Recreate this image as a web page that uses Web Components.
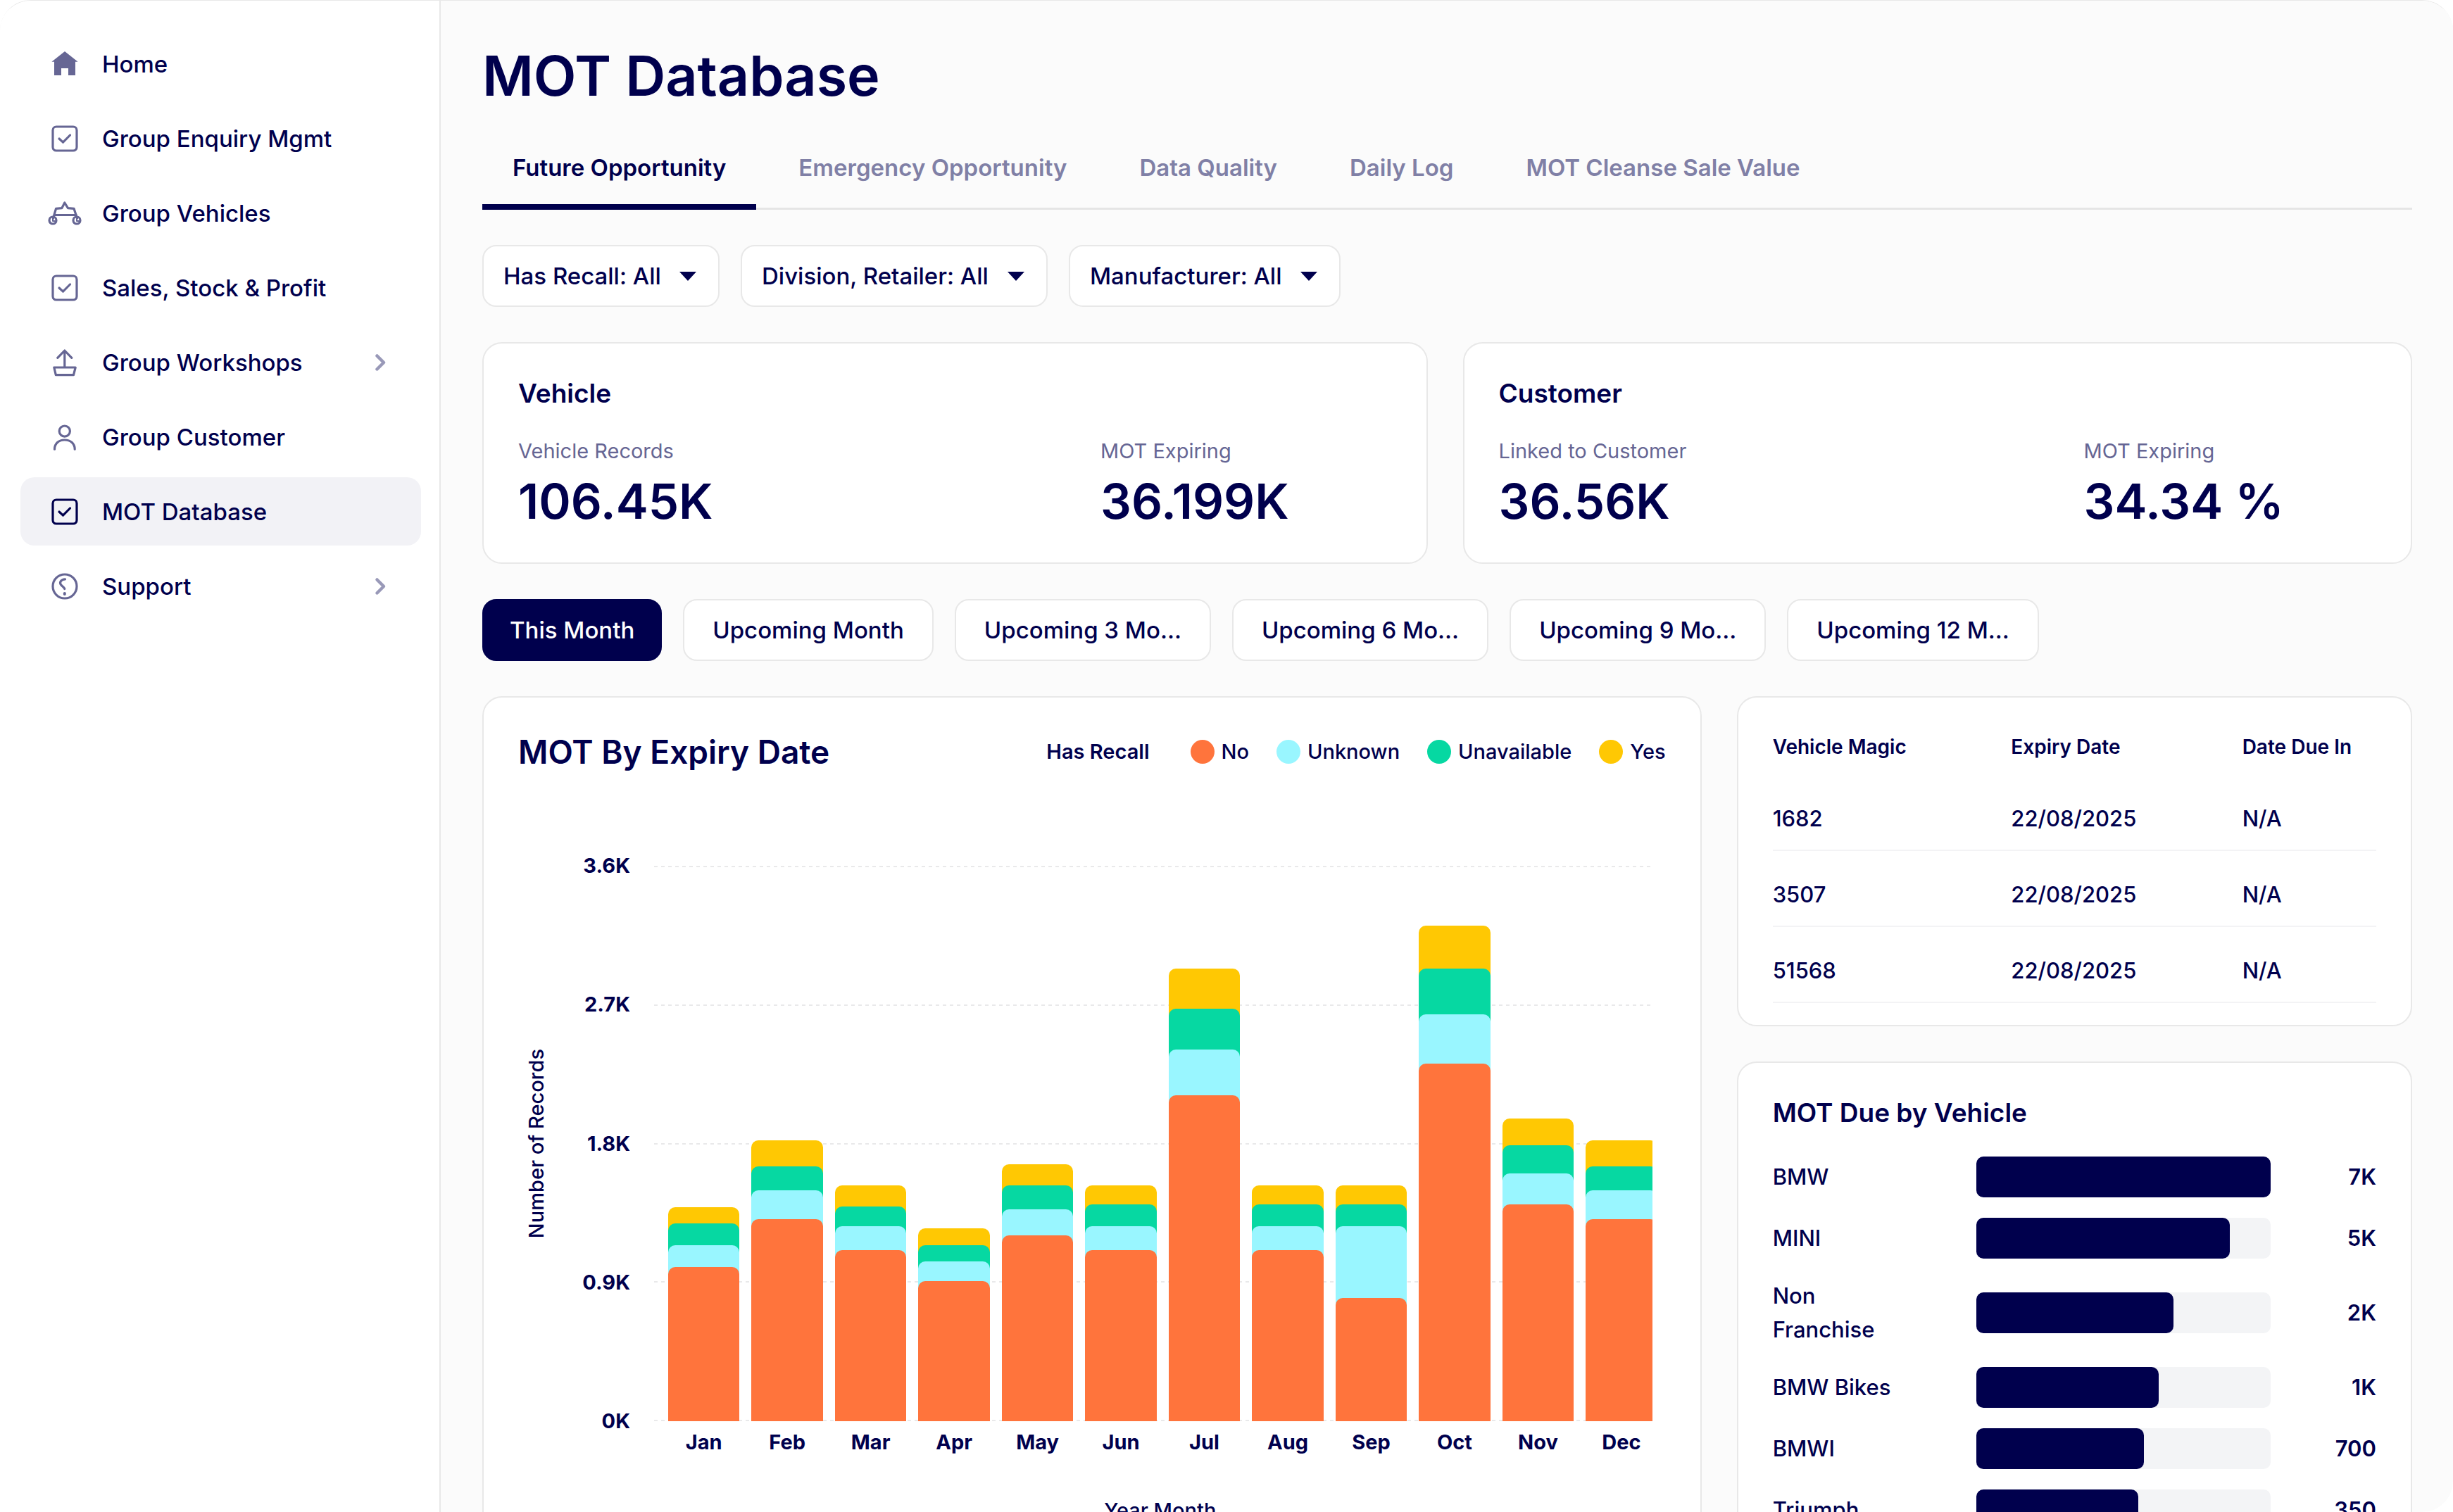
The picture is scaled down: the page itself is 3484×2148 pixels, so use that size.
<!DOCTYPE html>
<html lang="en">
<head>
<meta charset="utf-8">
<title>MOT Database</title>
<meta name="viewport" content="width=device-width, initial-scale=1">
<style>
  :root {
    --navy: #00004d;
    --navy-60: #666694;
    --navy-50: #8080a6;
    --navy-40: #9999b8;
    --line: #e8e8e8;
    --canvas: #fbfbfb;
    --tint: #f2f2f6;
    --track: #f3f4f6;
  }
  html, body { margin: 0; background: #fff; }
  body { font-family: Inter, "Liberation Sans", sans-serif; font-size: 33px; line-height: 40px; font-weight: 500; color: var(--navy); }
</style>
</head>
<body>

<app-shell>
  <side-nav slot="nav">
    <nav-item icon="home">Home</nav-item>
    <nav-item icon="check">Group Enquiry Mgmt</nav-item>
    <nav-item icon="vehicle">Group Vehicles</nav-item>
    <nav-item icon="check">Sales, Stock &amp; Profit</nav-item>
    <nav-item icon="workshop" expandable>Group Workshops</nav-item>
    <nav-item icon="person">Group Customer</nav-item>
    <nav-item icon="check" active>MOT Database</nav-item>
    <nav-item icon="support" expandable>Support</nav-item>
  </side-nav>

  <page-title>MOT Database</page-title>

  <tab-bar>
    <tab-item active>Future Opportunity</tab-item>
    <tab-item>Emergency Opportunity</tab-item>
    <tab-item>Data Quality</tab-item>
    <tab-item>Daily Log</tab-item>
    <tab-item>MOT Cleanse Sale Value</tab-item>
  </tab-bar>

  <button-row>
    <filter-select label="Has Recall"></filter-select>
    <filter-select label="Division, Retailer"></filter-select>
    <filter-select label="Manufacturer"></filter-select>
  </button-row>

  <summary-row>
    <ui-card heading="Vehicle">
      <stat-pair>
        <stat-figure label="Vehicle Records">106.45K</stat-figure>
        <stat-figure label="MOT Expiring">36.199K</stat-figure>
      </stat-pair>
    </ui-card>
    <ui-card heading="Customer">
      <stat-pair>
        <stat-figure label="Linked to Customer">36.56K</stat-figure>
        <stat-figure label="MOT Expiring">34.34 %</stat-figure>
      </stat-pair>
    </ui-card>
  </summary-row>

  <button-row>
    <period-button active>This Month</period-button>
    <period-button>Upcoming Month</period-button>
    <period-button>Upcoming 3 Mo...</period-button>
    <period-button>Upcoming 6 Mo...</period-button>
    <period-button>Upcoming 9 Mo...</period-button>
    <period-button>Upcoming 12 M...</period-button>
  </button-row>

  <detail-row>
    <ui-card>
      <expiry-chart></expiry-chart>
    </ui-card>
    <ui-card slot="aside" compact>
      <expiry-table></expiry-table>
    </ui-card>
    <ui-card slot="aside" heading="MOT Due by Vehicle">
      <due-list>
        <due-row share="100" value="7K">BMW</due-row>
        <due-row share="86" value="5K">MINI</due-row>
        <due-row share="67" value="2K">Non Franchise</due-row>
        <due-row share="62" value="1K">BMW Bikes</due-row>
        <due-row share="57" value="700">BMWI</due-row>
        <due-row share="55" value="350">Triumph</due-row>
      </due-list>
    </ui-card>
  </detail-row>
</app-shell>

<script>
const define = (name, render) => customElements.define(name, class extends HTMLElement {
  constructor() { super(); this.attachShadow({ mode: 'open' }); }
  connectedCallback() {
    if (this.shadowRoot.childNodes.length) return;
    const t = document.createElement('template');
    t.innerHTML = '<style>*,*::before,*::after{box-sizing:border-box}:host{display:block;box-sizing:border-box}</style>' + render(this);
    this.shadowRoot.append(t.content.cloneNode(true));
  }
});

define('app-shell', () => `
  <style>
    :host { display: flex; height: 100vh; overflow: hidden; border-top: 1px solid var(--line); border-radius: 44px; }
    main { flex: 1; min-width: 0; display: flex; flex-direction: column; gap: 50px; padding: 59px 58px 50px 59px; background: var(--canvas); overflow: hidden; }
    ::slotted(*) { flex-shrink: 0; }
  </style>
  <slot name="nav"></slot>
  <main><slot></slot></main>`);

define('side-nav', () => `
  <style>
    :host { width: 626px; border-right: 2px solid var(--line); background: #fff; }
    nav { display: flex; flex-direction: column; gap: 9px; padding: 41px 26px 41px 29px; }
  </style>
  <nav aria-label="Main"><slot></slot></nav>`);

const icons = {
  home: '<path fill="currentColor" stroke="none" d="M21 3 39.6 17.8H36V37H26V27H16V37H6V17.8H2.4Z"/>',
  check: '<rect x="4" y="4" width="34" height="34" rx="5"/><path d="m13 21 5.5 5.2L28.5 16"/>',
  vehicle: '<path d="M4.5 28 8.6 14.3 16.8 13.7 20.8 6 25.5 13.7 34 14.3 38.5 28M6 23.5H37.5"/><circle cx="4" cy="31" r="5"/><circle cx="38" cy="31" r="5"/><path stroke-width="2" d="M4 29v3h3M38 29v3h3"/>',
  workshop: '<path d="M20.8 28V4M10.8 14.3 20.8 4 30.8 14.3M5.8 28H36.2L33.5 38.7H8.3Z"/>',
  person: '<circle cx="20.8" cy="12.6" r="7.6"/><path d="M6.5 38.2C6.5 30 12.5 25 20.8 25S35.2 30 35.2 38.2"/>',
  support: '<circle cx="21" cy="21" r="17"/><path d="M21.5 10.8C16 11 12.8 15 15.6 18.8 17 20.6 20 21.8 20.8 24.5"/><path stroke-width="4" d="M20.8 31v1"/>'
};

define('nav-item', el => `
  <style>
    a { display: flex; align-items: center; height: 97px; padding: 0 50px 0 42px; gap: 32px; border-radius: 20px; color: inherit; text-decoration: none; }
    a[aria-current] { background: var(--tint); }
    svg { flex: none; fill: none; stroke: currentColor; stroke-linecap: round; stroke-linejoin: round; overflow: visible; }
    .icon { width: 42px; height: 42px; stroke-width: 3.2; color: var(--navy-60); }
    a[aria-current] .icon { color: var(--navy); }
    .label { flex: 1; white-space: nowrap; }
    .more { width: 15px; height: 24px; stroke-width: 4.5; color: var(--navy-40); }
  </style>
  <a href="#" ${el.hasAttribute('active') ? 'aria-current="page"' : ''}>
    <svg class="icon" viewBox="0 0 42 42" aria-hidden="true">${icons[el.getAttribute('icon')]}</svg>
    <span class="label"><slot></slot></span>
    ${el.hasAttribute('expandable') ? '<svg class="more" viewBox="0 0 15 24" aria-hidden="true"><path d="m2.5 2.5 9.5 9.5-9.5 9.5"/></svg>' : ''}
  </a>`);

define('page-title', () => `
  <style>
    :host { margin-bottom: -26px; }
    h1 { margin: 0; font-size: 79px; line-height: 94px; font-weight: 600; }
  </style>
  <h1><slot></slot></h1>`);

define('tab-bar', () => `
  <style>
    :host { display: flex; gap: 17px; box-shadow: inset 0 -3px #e5e5e5; }
  </style>
  <slot></slot>`);

define('tab-item', el => `
  <style>
    button { display: block; margin: 0; padding: 40px 43px 32px; border: 0; border-bottom: 8px solid transparent; background: none; font: inherit; font-weight: 600; color: var(--navy-50); white-space: nowrap; }
    button[aria-pressed="true"] { color: var(--navy); border-color: var(--navy); }
  </style>
  <button type="button" aria-pressed="${el.hasAttribute('active')}"><slot></slot></button>`);

define('button-row', () => `
  <style>:host { display: flex; flex-wrap: wrap; gap: 30px; }</style>
  <slot></slot>`);

define('filter-select', el => `
  <style>
    :host { display: grid; align-items: center; }
    select, svg { grid-area: 1 / 1; }
    select { appearance: none; margin: 0; padding: 22px 81px 22px 28px; border: 2px solid var(--line); border-radius: 20px; background: #fff; font: inherit; color: inherit; }
    svg { justify-self: end; width: 24px; height: 13px; margin-right: 33px; fill: var(--navy); pointer-events: none; }
  </style>
  <select aria-label="${el.getAttribute('label')}"><option>${el.getAttribute('label')}: All</option></select>
  <svg viewBox="0 0 24 13" aria-hidden="true"><path d="M0 0H24L12 13Z"/></svg>`);

define('summary-row', () => `
  <style>:host { display: grid; grid-template-columns: 224fr 225fr; gap: 50px; }</style>
  <slot></slot>`);

define('ui-card', el => `
  <style>
    :host { display: flex; flex-direction: column; gap: 38px; padding: 47px 49px; border: 2px solid var(--line); border-radius: 28px; background: #fff; }
    :host([compact]) { padding-bottom: 31px; }
    h2 { margin: 0; font-size: 37px; line-height: 48px; font-weight: 600; }
  </style>
  ${el.hasAttribute('heading') ? `<h2>${el.getAttribute('heading')}</h2>` : ''}
  <slot></slot>`);

define('stat-pair', () => `
  <style>:host { display: grid; grid-template-columns: 2fr 1fr; }</style>
  <slot></slot>`);

define('stat-figure', el => `
  <style>
    :host { display: flex; flex-direction: column; gap: 11px; white-space: nowrap; }
    .label { font-size: 29px; line-height: 40px; font-weight: 400; color: var(--navy-60); }
    .value { font-size: 69px; line-height: 80px; font-weight: 600; }
  </style>
  <span class="label">${el.getAttribute('label')}</span>
  <span class="value"><slot></slot></span>`);

define('period-button', el => `
  <style>
    button { display: block; margin: 0; padding: 22px 40px; border: 2px solid var(--line); border-radius: 20px; background: #fff; font: inherit; color: var(--navy); white-space: nowrap; }
    button[aria-pressed="true"] { padding-inline: 37px; background: var(--navy); border-color: var(--navy); color: #fff; }
  </style>
  <button type="button" aria-pressed="${el.hasAttribute('active')}"><slot></slot></button>`);

define('detail-row', () => `
  <style>
    :host { display: grid; grid-template-columns: 1731fr 959fr; gap: 50px; align-items: start; }
    .aside { display: flex; flex-direction: column; gap: 50px; }
  </style>
  <slot></slot>
  <div class="aside"><slot name="aside"></slot></div>`);

/* Cumulative record counts per month: top of Yes, Unavailable, Unknown and No. */
const months = [
  ['Jan', 1387, 1282, 1141, 999], ['Feb', 1821, 1652, 1497, 1310], ['Mar', 1529, 1392, 1264, 1109],
  ['Apr', 1250, 1141, 1036, 908], ['May', 1665, 1529, 1373, 1205], ['Jun', 1529, 1405, 1264, 1109],
  ['Jul', 2934, 2674, 2409, 2113], ['Aug', 1529, 1405, 1264, 1109], ['Sep', 1529, 1405, 1264, 799],
  ['Oct', 3212, 2934, 2637, 2318], ['Nov', 1962, 1789, 1606, 1405], ['Dec', 1821, 1652, 1497, 1310]
];
const axisMax = 3600;

define('expiry-chart', () => `
  <style>
    :host { font-size: 29px; --no: #ff743c; --unknown: #99f6ff; --unavailable: #06d8a2; --yes: #ffc803; }
    header { display: flex; align-items: center; margin-bottom: 132px; }
    h2 { flex: 1; margin: 0; font-size: 46px; line-height: 60px; font-weight: 600; white-space: nowrap; }
    .by { font-weight: 600; margin-right: 58px; }
    ul { display: flex; gap: 39px; margin: 0; padding: 0; list-style: none; }
    li { display: flex; align-items: center; gap: 10px; }
    li::before { content: ""; width: 34px; height: 34px; border-radius: 50%; background: var(--c); }
    .chart { display: grid; grid-template-columns: 52px 107px 34px minmax(0, 1fr); padding-right: 19px; }
    .y-title { display: flex; align-items: center; justify-content: center; }
    .y-title span { writing-mode: vertical-rl; transform: rotate(180deg); white-space: nowrap; }
    .ticks { display: flex; flex-direction: column; justify-content: space-between; margin: -20px 0; text-align: right; font-weight: 700; }
    .plot { grid-column: 4; display: grid; height: 789px; }
    .plot > * { grid-area: 1 / 1; min-width: 0; min-height: 0; }
    .grid { display: flex; flex-direction: column; justify-content: space-between; }
    .grid i { height: 2px; background: repeating-linear-gradient(90deg, #e9e9ea 0 5px, transparent 5px 10px); }
    .cols { display: flex; gap: 17px; padding-left: 20px; margin-right: -7px; }
    .clip { display: grid; overflow: hidden; }
    .bar { flex: 1; display: grid; grid-template-rows: 100%; align-items: end; }
    .bar i { grid-area: 1 / 1; border-radius: 10px 10px 0 0; }
    .months { grid-column: 4; padding-top: 10px; }
    .months span { flex: 1; text-align: center; font-weight: 700; }
    .x-title { grid-column: 4; padding: 57px 0 20px 20px; text-align: center; }
  </style>
  <header>
    <h2>MOT By Expiry Date</h2>
    <span class="by">Has Recall</span>
    <ul>
      <li style="--c:var(--no)">No</li>
      <li style="--c:var(--unknown)">Unknown</li>
      <li style="--c:var(--unavailable)">Unavailable</li>
      <li style="--c:var(--yes)">Yes</li>
    </ul>
  </header>
  <div class="chart">
    <div class="y-title"><span>Number of Records</span></div>
    <div class="ticks"><span>3.6K</span><span>2.7K</span><span>1.8K</span><span>0.9K</span><span>0K</span></div>
    <div class="plot">
      <div class="grid"><i></i><i></i><i></i><i></i><i></i></div>
      <div class="clip"><div class="cols">
        ${months.map(([, ...tops]) => `<div class="bar">${['yes', 'unavailable', 'unknown', 'no'].map((k, i) =>
          `<i style="height:${tops[i] / axisMax * 100}%;background:var(--${k})"></i>`).join('')}</div>`).join('')}
      </div></div>
    </div>
    <div class="cols months">${months.map(([m]) => `<span>${m}</span>`).join('')}</div>
    <div class="x-title">Year Month</div>
  </div>`);

define('expiry-table', () => `
  <style>
    table { width: 100%; table-layout: fixed; border-collapse: collapse; text-align: left; }
    th { padding: 0 0 17px; font-size: 28px; line-height: 46px; font-weight: 600; }
    th:nth-child(1) { width: 39.5%; }
    th:nth-child(2) { width: 38.3%; }
    td { padding: 42px 0 24px; border-bottom: 2px solid #f3f3f5; font-size: 31px; line-height: 40px; }
    th, td { white-space: nowrap; }
  </style>
  <table>
    <thead><tr><th scope="col">Vehicle Magic</th><th scope="col">Expiry Date</th><th scope="col">Date Due In</th></tr></thead>
    <tbody>
      <tr><td>1682</td><td>22/08/2025</td><td>N/A</td></tr>
      <tr><td>3507</td><td>22/08/2025</td><td>N/A</td></tr>
      <tr><td>51568</td><td>22/08/2025</td><td>N/A</td></tr>
    </tbody>
  </table>`);

define('due-list', () => `
  <style>:host { display: flex; flex-direction: column; gap: 29px; }</style>
  <slot></slot>`);

define('due-row', el => `
  <style>
    :host { display: grid; grid-template-columns: 290fr 418fr 150fr; align-items: center; min-height: 58px; font-size: 31px; line-height: 48px; }
    .name { padding-right: 90px; }
    .track { height: 58px; border-radius: 10px; background: var(--track); }
    .fill { height: 100%; border-radius: 10px; background: var(--navy); }
    .value { text-align: right; font-weight: 600; }
  </style>
  <span class="name"><slot></slot></span>
  <div class="track"><div class="fill" style="width:${el.getAttribute('share')}%"></div></div>
  <span class="value">${el.getAttribute('value')}</span>`);
</script>
</body>
</html>
